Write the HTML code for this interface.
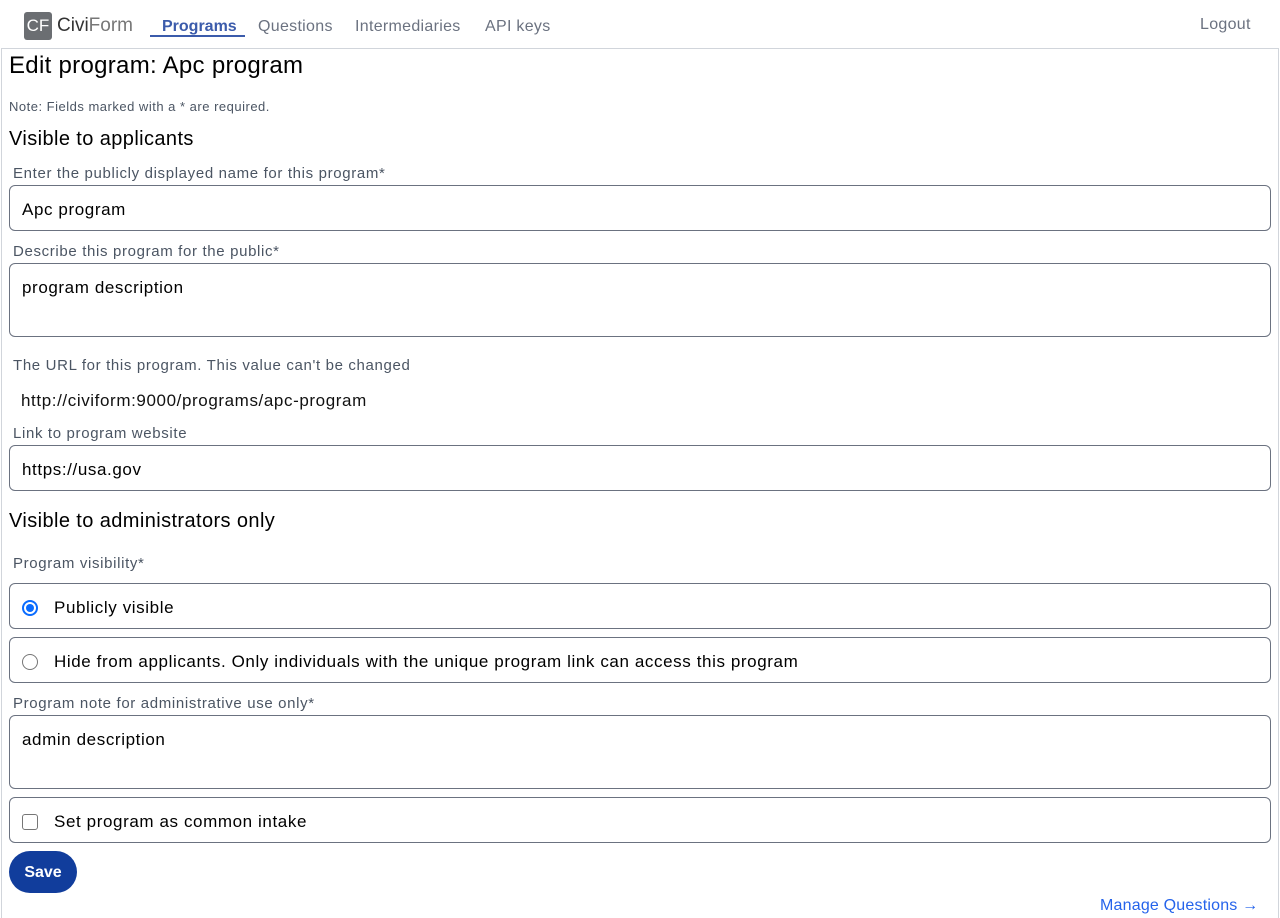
<!DOCTYPE html>
<html><head><meta charset="utf-8"><style>
*{box-sizing:border-box}
body{margin:0;width:1280px;height:918px;overflow:hidden;font-family:"Liberation Sans",sans-serif;color:#000;background:#fff;position:relative}
.a{position:absolute}
.nav{font-size:16px;color:#6b7280;top:18px;letter-spacing:0.3px}
.lbl{font-size:15px;color:#4b5563;left:13px;letter-spacing:0.65px}
.box{left:9px;width:1262px;border:1px solid #6b7280;border-radius:6px;background:#fff}
.txt{font-size:17px;left:22px;letter-spacing:0.6px}
</style></head><body>
<div class="a" style="left:24px;top:12px;width:28px;height:28px;background:#6b6e72;border-radius:3px;color:#fff;font-size:17px;line-height:28px;text-align:center">CF</div>
<div class="a" style="left:57px;top:15px;font-size:19px;color:#333">Civi<span style="color:#777;">Form</span></div>
<div class="a nav" style="left:162px;color:#3b5bab;font-weight:bold;letter-spacing:0">Programs</div>
<div class="a" style="left:150px;top:35px;width:95px;height:2px;background:#3b5bab"></div>
<div class="a nav" style="left:258px">Questions</div>
<div class="a nav" style="left:355px">Intermediaries</div>
<div class="a nav" style="left:485px">API keys</div>
<div class="a nav" style="left:1200px;top:16px">Logout</div>
<div class="a" style="left:1px;top:48px;width:1278px;height:870px;border:1px solid #d1d5db;border-bottom:none"></div>
<div class="a" style="left:9px;top:52px;font-size:24px;letter-spacing:0.3px">Edit program: Apc program</div>
<div class="a" style="left:9px;top:99px;font-size:13px;color:#4b5563;letter-spacing:0.5px">Note: Fields marked with a * are required.</div>
<div class="a" style="left:9px;top:128px;font-size:20px;letter-spacing:0.4px">Visible to applicants</div>
<div class="a lbl" style="top:165px">Enter the publicly displayed name for this program*</div>
<div class="a box" style="top:185px;height:46px"></div>
<div class="a txt" style="top:200px">Apc program</div>
<div class="a lbl" style="top:243px">Describe this program for the public*</div>
<div class="a box" style="top:263px;height:74px"></div>
<div class="a txt" style="top:278px">program description</div>
<div class="a lbl" style="top:357px">The URL for this program. This value can't be changed</div>
<div class="a" style="left:21px;top:391px;font-size:17px;color:#111;letter-spacing:0.6px">http://civiform:9000/programs/apc-program</div>
<div class="a lbl" style="top:425px">Link to program website</div>
<div class="a box" style="top:445px;height:46px"></div>
<div class="a txt" style="top:460px">https://usa.gov</div>
<div class="a" style="left:9px;top:510px;font-size:20px;letter-spacing:0.4px">Visible to administrators only</div>
<div class="a lbl" style="top:555px">Program visibility*</div>
<div class="a box" style="top:583px;height:46px"></div>
<div class="a" style="left:22px;top:600px;width:16px;height:16px;border-radius:50%;border:2px solid #0a6cff;background:#fff"><div style="margin:2px;width:8px;height:8px;border-radius:50%;background:#0a6cff"></div></div>
<div class="a txt" style="left:54px;top:598px">Publicly visible</div>
<div class="a box" style="top:637px;height:46px"></div>
<div class="a" style="left:22px;top:654px;width:16px;height:16px;border-radius:50%;border:1px solid #767676"></div>
<div class="a txt" style="left:54px;top:652px">Hide from applicants. Only individuals with the unique program link can access this program</div>
<div class="a lbl" style="top:695px">Program note for administrative use only*</div>
<div class="a box" style="top:715px;height:74px"></div>
<div class="a txt" style="top:730px">admin description</div>
<div class="a box" style="top:797px;height:46px"></div>
<div class="a" style="left:22px;top:814px;width:16px;height:16px;border-radius:3px;border:1px solid #767676"></div>
<div class="a txt" style="left:54px;top:812px">Set program as common intake</div>
<div class="a" style="left:9px;top:851px;width:68px;height:42px;border-radius:21px;background:#113d9c;color:#fff;font-weight:bold;font-size:16px;line-height:44px;text-align:center">Save</div>
<div class="a" style="left:1100px;top:897px;font-size:16px;color:#2563eb;letter-spacing:0.2px">Manage Questions →</div>
</body></html>
